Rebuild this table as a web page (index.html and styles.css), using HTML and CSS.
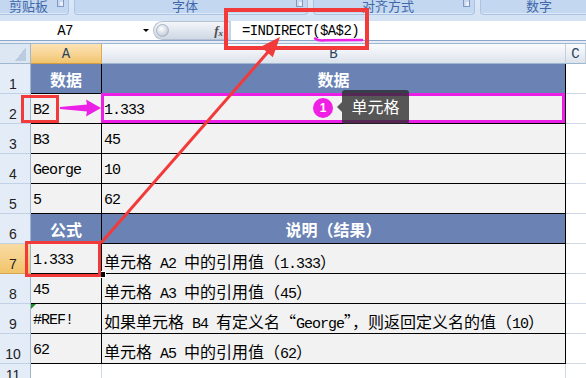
FILE: index.html
```html
<!DOCTYPE html>
<html lang="zh-CN">
<head>
<meta charset="utf-8">
<title>INDIRECT</title>
<link rel="stylesheet" href="styles.css">
</head>
<body>
<div class="app">
  <div class="ribbon">
    <div class="grp g1"><span class="lbl">剪贴板</span><i class="launch"></i></div>
    <div class="grp g2"><span class="lbl">字体</span><i class="launch"></i></div>
    <div class="grp g3"><span class="lbl">对齐方式</span><i class="launch"></i></div>
    <div class="grp g4"><span class="lbl">数字</span></div>
  </div>
  <div class="fbar">
    <div class="namebox"><span class="name">A7</span><span class="dd"></span></div>
    <div class="pill"><span class="knob"></span><span class="fx">f<sub>x</sub></span></div>
    <div class="formula">=INDIRECT($A$2)</div>
  </div>
  <div class="spacer"></div>
  <div class="sheet">
    <div class="corner"></div><div class="colhdr active">A</div><div class="colhdr">B</div><div class="colhdr">C</div>

    <div class="rowhdr">1</div><div class="c h">数据</div><div class="c h">数据</div><div class="x"></div>
    <div class="rowhdr">2</div><div class="c a">B2</div><div class="c b">1.333</div><div class="x"></div>
    <div class="rowhdr">3</div><div class="c a">B3</div><div class="c b">45</div><div class="x"></div>
    <div class="rowhdr">4</div><div class="c a">George</div><div class="c b">10</div><div class="x"></div>
    <div class="rowhdr">5</div><div class="c a">5</div><div class="c b">62</div><div class="x"></div>
    <div class="rowhdr">6</div><div class="c h">公式</div><div class="c h">说明（结果）</div><div class="x"></div>
    <div class="rowhdr active">7</div><div class="c a">1.333</div><div class="c b"><span><span class="zh">单元格</span> A2 <span class="zh">中的引用值（</span>1.333<span class="zh">）</span></span></div><div class="x"></div>
    <div class="rowhdr">8</div><div class="c a">45</div><div class="c b"><span><span class="zh">单元格</span> A3 <span class="zh">中的引用值（</span>45<span class="zh">）</span></span></div><div class="x"></div>
    <div class="rowhdr">9</div><div class="c a">#REF!</div><div class="c b"><span><span class="zh">如果单元格</span> B4 <span class="zh">有定义名“</span>George<span class="zh">”，则返回定义名的值（</span>10<span class="zh">）</span></span></div><div class="x"></div>
    <div class="rowhdr">10</div><div class="c a">62</div><div class="c b"><span><span class="zh">单元格</span> A5 <span class="zh">中的引用值（</span>62<span class="zh">）</span></span></div><div class="x"></div>
    <div class="rowhdr last">11</div><div class="e"></div><div class="e"></div><div class="x"></div>
  </div>

  <i class="errmark"></i>
  <i class="handle"></i>

  <svg class="overlay" width="586" height="378" viewBox="0 0 586 378">
    <rect x="226" y="10" width="141" height="38" fill="none" stroke="#f23a3a" stroke-width="4"/>
    <path d="M315 38.5 Q318 41 325 40.3 L362 40" fill="none" stroke="#ec1fe6" stroke-width="2.5" stroke-linecap="round"/>
    <rect x="102.5" y="94.5" width="461" height="27" fill="none" stroke="#ec1fe6" stroke-width="3"/>
    <rect x="22.5" y="96.5" width="35" height="25" fill="none" stroke="#f23a3a" stroke-width="3"/>
    <polygon points="60,107 87,104.5 86,99.5 101,108 86,116.5 87,111.5 60,109" fill="#ec1fe6"/>
    <rect x="26.5" y="242.5" width="73" height="33" fill="none" stroke="#f23a3a" stroke-width="3"/>
    <line x1="101" y1="243" x2="268" y2="52" stroke="#f23a3a" stroke-width="3"/>
    <polygon points="280,37 272.8,57.3 260.8,46.7" fill="#f23a3a"/>
  </svg>

  <div class="badge">1</div>
  <div class="tip">单元格</div>
</div>
</body>
</html>
```
FILE: styles.css
```css
* { box-sizing: border-box; margin: 0; padding: 0; }
html, body { width: 586px; height: 378px; overflow: hidden; background: #fff; }
body { font-family: "Liberation Mono", "Noto Sans CJK SC", monospace; }

.app { position: relative; width: 586px; height: 378px; overflow: hidden; }

/* ribbon group labels */
.ribbon {
  height: 21px;
  display: flex;
  gap: 5px;
  margin-left: -10px;
  background: linear-gradient(#dbe7f6, #d3e2f4);
}
.grp {
  height: 15px;
  display: flex;
  align-items: flex-start;
  justify-content: center;
  background: #c3d7f0;
  border: 1px solid #aac3e2;
  border-top: none;
  border-radius: 0 0 4px 4px;
  box-shadow: inset 0 -1px 0 #dde9f7;
  position: relative;
  flex: none;
}
.g1 { width: 79px; padding-left: 4px; justify-content: flex-start; }
.g1 .lbl { margin-left: 14px; }
.g2 { width: 234px; padding-right: 12px; }
.g3 { width: 162px; padding-right: 12px; }
.g4 { width: 130px; padding-right: 12px; }
.lbl {
  font-family: "Noto Sans CJK SC", sans-serif;
  font-size: 13px;
  line-height: 11px;
  color: #4068aa;
}
.launch {
  position: absolute;
  right: 4px;
  top: -1px;
  width: 7px;
  height: 8px;
  border: 1px solid #7d99c4;
  background: #eaf1fa;
  box-shadow: inset 2px 2px 0 #c9d8ec;
}

/* formula bar */
.fbar {
  height: 20px;
  display: flex;
  background: #fff;
  border-bottom: 1px solid #8aa6cb;
}
.namebox {
  width: 153px;
  display: flex;
  align-items: center;
  font-size: 14px;
  letter-spacing: -0.6px;
  color: #000;
}
.name { width: 130px; text-align: center; }
.dd {
  margin-left: 13px;
  width: 0; height: 0;
  border-left: 3px solid transparent;
  border-right: 3px solid transparent;
  border-top: 3.5px solid #000;
}
.pill {
  width: 76px;
  height: 19px;
  display: flex;
  align-items: center;
  justify-content: space-between;
  padding: 0 6px 0 2px;
  border: 1px solid #b3c1d3;
  border-right: none;
  border-radius: 10px 0 0 10px;
  background: linear-gradient(#f4f6f9, #dfe5ee 55%, #cfd8e4);
}
.knob {
  width: 13px; height: 13px;
  border-radius: 50%;
  background: radial-gradient(circle at 40% 35%, #ffffff, #d4dbe5 55%, #9ea9b8);
  border: 1px solid #aab5c4;
}
.fx {
  font-family: "Liberation Serif", serif;
  font-style: italic;
  font-weight: bold;
  font-size: 13px;
  color: #4d4d4d;
}
.fx sub { font-size: 9px; vertical-align: -1px; }
.formula {
  flex: 1;
  display: flex;
  align-items: center;
  padding-left: 11px;
  font-size: 14px;
  letter-spacing: -0.6px;
  color: #000;
  border-left: 2px solid #c8d3e1;
}

.spacer {
  height: 3px;
  background: #e6edf6;
  border-bottom: 1px solid #9eb6ce;
}

/* sheet */
.sheet {
  display: grid;
  grid-template-columns: 31px 71px 464px 20px;
  grid-template-rows: 20px repeat(10, 30px) 15px;
}
.corner {
  background:
    linear-gradient(to bottom right, transparent 50%, #bccce0 50%) right 4px bottom 2px / 11px 14px no-repeat,
    #dde7f3;
  border-right: 1px solid #9eb6ce;
  border-bottom: 1px solid #9eb6ce;
}
.colhdr {
  display: flex;
  align-items: center;
  justify-content: center;
  font-size: 14px;
  color: #27415f;
  background: linear-gradient(#fafbfd, #e9edf3 60%, #dde3ec);
  border-right: 1px solid #c3cfde;
  border-bottom: 1px solid #9eb6ce;
  padding-top: 1px;
}
.colhdr.active {
  background: linear-gradient(#fbe3b4, #f7d28f 60%, #f1c46c);
  border-right: 1px solid #dcaa58;
  border-bottom: 1px solid #d29a41;
}
.rowhdr {
  display: flex;
  align-items: flex-end;
  justify-content: center;
  padding: 0 4px 1px 0;
  font-family: "Liberation Sans", sans-serif;
  font-size: 14px;
  color: #222;
  background: #e4ecf7;
  border-right: 1px solid #9eb6ce;
  border-bottom: 1px solid #c2d2e6;
}
.rowhdr.active {
  background: linear-gradient(#f9dca4, #f2c46a);
  border-bottom-color: #d9a650;
}
.rowhdr.last { padding-bottom: 0; align-items: flex-start; padding-top: 3px; }

.c {
  display: flex;
  align-items: center;
  padding-top: 4px;
  white-space: nowrap;
  overflow: hidden;
  background: #f2f2f2;
  border-right: 1px solid #000;
  border-bottom: 1px solid #000;
  font-size: 15px;
  letter-spacing: -1px;
  color: #000;
}
.c.a { padding-left: 2px; }
.c.b { padding-left: 2px; }
.c.h {
  justify-content: center;
  padding-top: 1px;
  background: #6a83b4;
  color: #fff;
  font-family: "Noto Sans CJK SC", sans-serif;
  font-size: 16px;
  font-weight: bold;
  letter-spacing: 0;
}
.zh { font-family: "Noto Sans CJK SC", sans-serif; font-size: 16px; letter-spacing: 0; }
.x {
  background: #fff;
  border-bottom: 1px solid #d0d7e5;
}
.e {
  background: #fff;
  border-right: 1px solid #d0d7e5;
}

/* small markers on cells */
.errmark {
  position: absolute;
  left: 31px;
  top: 304px;
  width: 0; height: 0;
  border-top: 5px solid #1f8a2b;
  border-right: 5px solid transparent;
}
.handle {
  position: absolute;
  left: 99px;
  top: 271px;
  width: 7px;
  height: 7px;
  background: #000;
  border: 1px solid #fff;
}

.overlay { position: absolute; left: 0; top: 0; }

.badge {
  position: absolute;
  left: 313px;
  top: 98px;
  width: 20px;
  height: 20px;
  border-radius: 50%;
  background: #ef1fe4;
  color: #fff;
  font-family: "Liberation Sans", sans-serif;
  font-size: 12px;
  font-weight: bold;
  display: flex;
  align-items: center;
  justify-content: center;
}
.tip {
  position: absolute;
  left: 342px;
  top: 90px;
  width: 67px;
  height: 34px;
  border-radius: 3px;
  background: rgba(42, 42, 42, 0.78);
  color: #fff;
  font-family: "Noto Sans CJK SC", sans-serif;
  font-size: 16px;
  display: flex;
  align-items: center;
  justify-content: center;
  padding-bottom: 2px;
}
.tip::before {
  content: "";
  position: absolute;
  left: -5px;
  top: 12px;
  border-top: 5px solid transparent;
  border-bottom: 5px solid transparent;
  border-right: 5px solid rgba(42, 42, 42, 0.78);
}
```
